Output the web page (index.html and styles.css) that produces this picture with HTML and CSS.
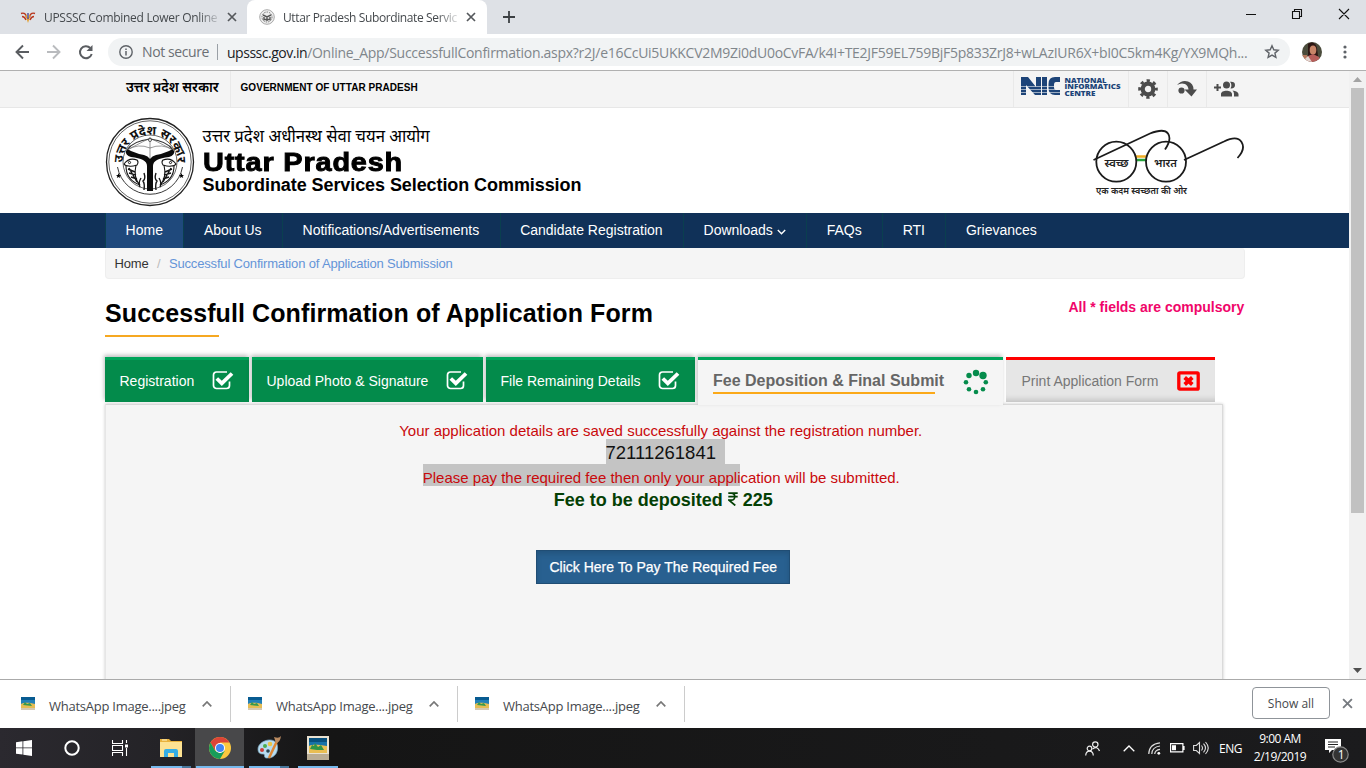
FILE: index.html
```html
<!DOCTYPE html>
<html lang="en">
<head>
<meta charset="utf-8">
<title>Uttar Pradesh Subordinate Services Selection Commission</title>
<link rel="stylesheet" href="styles.css">
</head>
<body>
<svg class="defs" width="0" height="0">
  <defs>
    <symbol id="close" viewBox="0 0 10 10"><path d="M1 1l8 8M9 1L1 9" fill="none" stroke="currentColor" stroke-width="1.7"/></symbol>
    <symbol id="check" viewBox="0 0 22 20"><path d="M17.5 11.5V15.500a3 3 0 0 1-3 3H4.500a3 3 0 0 1-3-3V5a3 3 0 0 1 3-3h10.500" fill="none" stroke="#fff" stroke-width="1.7"/><path d="M4.800 8.500l5 4.800L20 3.500" fill="none" stroke="#fff" stroke-width="3.800"/></symbol>
    <symbol id="photo" viewBox="0 0 22 24"><path d="M0 0h22v24H0z" fill="#e9e2d2"/><path d="M0 18h22v6H0z" fill="#b9ac94"/><path d="M2 2h18v15H2z" fill="#1672a8"/><path d="M2 2h18v4H2z" fill="#07507e"/><path d="M2 10c5-2 9-1 18 0v7H2z" fill="#e8bd52"/><path d="M3 13l2-4 2 1 1-3 3 4 3-2 3 5-7 0z" fill="#2e9447"/></symbol>
    <symbol id="photo-small" viewBox="0 0 14 13"><path d="M0 0h14v13H0z" fill="#d5c9b2"/><path d="M0 0h14v10H0z" fill="#2180b8"/><path d="M0 0h14v3H0z" fill="#075b91"/><path d="M0 7c5-2 9-1 14 0v4H0z" fill="#e5bd55"/><path d="M2 8l2-3 2 2 3-1 2 3z" fill="#36994c"/></symbol>
    <symbol id="up" viewBox="0 0 10 6"><path d="M.7 5.300L5 1l4.300 4.300" fill="none" stroke="currentColor" stroke-width="1.7"/></symbol>
  </defs>
</svg>

<div class="tabstrip">
  <div class="tab">
    <svg class="fav" width="16" height="16" viewBox="0 0 16 16"><path d="M1 4.500c3-1 5 0 5.500 4M15 4.500c-3-1-5 0-5.500 4M2 7.500c2 0 3 1 4 3.500M14 7.500c-2 0-3 1-4 3.500" fill="none" stroke="#b8371f" stroke-width="1.400"/><path d="M6 6l2 6 2-6" fill="none" stroke="#e4a02e" stroke-width="1.200"/><path d="M8 4v6" stroke="#3b3b8f" stroke-width="1.300"/></svg>
    <span class="tab-title t1">UPSSSC Combined Lower Online</span>
    <svg class="tab-x" width="10" height="10"><use href="#close"/></svg>
  </div>
  <div class="tab active">
    <svg class="fav" width="16" height="16" viewBox="0 0 16 16"><circle cx="8" cy="8" r="7.300" fill="#eee" stroke="#aaa"/><circle cx="8" cy="8" r="5" fill="none" stroke="#777" stroke-dasharray="1.500 1"/><path d="M4 6l4 2 4-2M8 8v4M5 8v2.500h6V8" fill="none" stroke="#555" stroke-width="1.400"/></svg>
    <span class="tab-title t2">Uttar Pradesh Subordinate Servic</span>
    <svg class="tab-x" width="10" height="10"><use href="#close"/></svg>
  </div>
  <svg class="plus" width="12" height="12" viewBox="0 0 12 12"><path d="M6 0v12M0 6h12" stroke="#3c4043" stroke-width="1.800"/></svg>
  <svg class="winctl" width="104" height="12" viewBox="0 0 104 12"><path d="M0 6.500h10M46.500 3.500h7v7h-7zM48.500 3.500v-2h7v7h-2M93 1l10 10M103 1L93 11" fill="none" stroke="#111" stroke-width="1.100"/></svg>
</div>

<div class="toolbar">
  <svg class="navicons" width="82" height="16" viewBox="0 0 82 16"><path d="M15 8H2.500M9 1.500L2.500 8 9 14.500" fill="none" stroke="#5a5d61" stroke-width="1.900"/><path d="M33 8h12.500M39 1.500L45.500 8 39 14.500" fill="none" stroke="#b9bbbe" stroke-width="1.900"/><path d="M76.300 4A6 6 0 1 0 77.700 10" fill="none" stroke="#5a5d61" stroke-width="2"/><path d="M78.500 1v6h-6z" fill="#5a5d61"/></svg>
  <div class="omnibox">
    <svg width="14" height="14" viewBox="0 0 14 14"><circle cx="7" cy="7" r="6.200" fill="none" stroke="#5f6368" stroke-width="1.400"/><path d="M7 6v4.500M7 3.400v1.500" stroke="#5f6368" stroke-width="1.500"/></svg>
    <span class="insecure">Not secure</span>
    <span class="url"><b class="host">upsssc.gov.in</b><span class="path">/Online_App/SuccessfullConfirmation.aspx?r2J/e16CcUi5UKKCV2M9Zi0dU0oCvFA/k4I+TE2JF59EL759BjF5p833ZrJ8+wLAzIUR6X+bI0C5km4Kg/YX9MQh...</span></span>
    <svg class="star" width="16" height="16" viewBox="0 0 16 16"><path d="M8 1.800l1.800 4 4.400.4-3.300 2.900 1 4.300L8 11.100l-3.900 2.300 1-4.300L1.800 6.200l4.400-.4z" fill="none" stroke="#5f6368" stroke-width="1.400"/></svg>
  </div>
  <svg class="avatar" width="20" height="20" viewBox="0 0 20 20"><clipPath id="av"><circle cx="10" cy="10" r="10"/></clipPath><g clip-path="url(#av)"><path d="M0 0h20v20H0z" fill="#4b4c3c"/><path d="M0 13h5v7H0z" fill="#b87a5e"/><path d="M6 2c4-3 8-1 9 4l1 8H6z" fill="#2d1714"/><ellipse cx="11" cy="8" rx="3.300" ry="4.500" fill="#c88568"/><path d="M3 20l3-6 5-2 6 3 2 5z" fill="#b75e5a"/><path d="M3 17l3-3 4 6H3z" fill="#e3d6d0"/></g></svg>
  <svg class="dots" width="4" height="14" viewBox="0 0 4 14"><circle cx="2" cy="2" r="1.600"/><circle cx="2" cy="7" r="1.600"/><circle cx="2" cy="12" r="1.600"/></svg>
</div>

<div class="viewport">
  <main class="page">
    <div class="topbar"><div class="container topbar-in">
      <div class="gov-hi">उत्तर प्रदेश सरकार</div>
      <div class="gov-en">GOVERNMENT OF UTTAR PRADESH</div>
      <div class="nic">
        <svg width="102" height="21" viewBox="0 0 102 21"><g fill="#1d4478"><path d="M0 1h7l8 10V1h5v18h-6L5 9v10H0zM21 1h5v18h-5zM39 1h-5q-6.500 0-6.500 7v4q0 7 6.500 7h5v-5h-4q-2 0-2-3V9q0-3 2-3h4z"/></g><path d="M0 10.500h40M0 13.500h40M0 16.500h40" stroke="#f4f4f4" stroke-width=".6"/><g class="nic-text"><text x="43.500" y="6.500" textLength="42" lengthAdjust="spacingAndGlyphs">NATIONAL</text><text x="43.500" y="13" textLength="56" lengthAdjust="spacingAndGlyphs">INFORMATICS</text><text x="43.500" y="19.500" textLength="31" lengthAdjust="spacingAndGlyphs">CENTRE</text></g></svg>
      </div>
      <div class="tool"><svg width="20" height="20" viewBox="0 0 20 20"><circle cx="10" cy="10" r="5.300" fill="none" stroke="#4c4c4c" stroke-width="4.200"/><circle cx="10" cy="10" r="8.300" fill="none" stroke="#4c4c4c" stroke-width="3" stroke-dasharray="3.260 3.260" stroke-dashoffset="1.630"/></svg></div>
      <div class="tool"><svg width="22" height="18" viewBox="0 0 22 18"><path d="M1 5Q6-.5 12 1.500q5.500 2 5.500 8H21L15.500 16.500 8.500 9.500h4q-.3-4-3.500-5.500Q5 2.500 1 5z" fill="#4c4c4c"/><circle cx="5.500" cy="10.500" r="3.100" fill="#4c4c4c"/></svg></div>
      <div class="tool last"><svg width="25" height="18" viewBox="0 0 25 18"><path d="M0 7.500h7M3.500 4v7" stroke="#4c4c4c" stroke-width="2"/><g fill="#4c4c4c"><circle cx="12.500" cy="5" r="3.500"/><path d="M7 16.500v-2.500c0-4.500 11-4.500 11 0v2.500zM16 1.800q5-.5 5 3.200t-4.500 3.400q2-3.400-.5-6.600zM18.500 10.500q5.500.8 6 3.500v2.500H20v-2.500Q20 11.500 18.500 10.500z"/></g></svg></div>
    </div></div>

    <header class="container masthead">
      <svg class="emblem" width="90" height="90" viewBox="0 0 90 90">
        <g fill="none" stroke="#222"><circle cx="45" cy="45" r="43.500" stroke-width="1.300"/><circle cx="45" cy="45" r="41.200" stroke-width=".7"/><path d="M12.500 50a33 33 0 0 0 65 0" stroke-width=".9"/><circle cx="45" cy="45" r="27" stroke-width=".7"/></g>
        <path id="arc" d="M18.300 50A27.200 27.200 0 1 1 71.700 50" fill="none"/>
        <text class="ring-text"><textPath href="#arc" startOffset="50%">उत्तर प्रदेश सरकार</textPath></text>
        <path d="M22 33Q28 24 45 22q17 2 23 11" fill="none" stroke="#333" stroke-width="1.200"/><path d="M22 33L45 21l23 12M45 20v22M22 33q11-7 23-2 12-5 23 2" fill="none" stroke="#555" stroke-width=".6"/><circle cx="45" cy="23" r="1.500" fill="#fff" stroke="#222" stroke-width=".7"/>
        <path d="M21 34q1-2.500 5 0 7 3 13 4 4 1 6 4 2-3 6-4 6-1 13-4 4-2.500 5 0 1 4-5 6-8 1-12 3-4 2-4 6v25h-6V49q0-4-4-6-4-2-12-3-6-2-5-6z" fill="#0c0c0c"/>
        <g fill="none" stroke="#151515"><path d="M19 47q5-7 13-4 2 2 0 5-6 2-8 1-4 0-5-2zM71 47q-5-7-13-4-2 2 0 5 6 2 8 1 4 0 5-2z" stroke-width="1.100"/><path d="M21 49q0 14 14 19-7-7-4-20M69 49q0 14-14 19 7-7 4-20" stroke-width="1.100"/><path d="M23 52l7 3M24 56l7 2M26 60l6 2M67 52l-7 3M66 56l-7 2M64 60l-6 2M24 51l8 14M66 51l-8 14" stroke-width="1.400"/><path d="M39 73q1-6-1-9 3-2 1-8M51 73q-1-6 1-9-3-2-1-8M35 70q-2-4 1-9M55 70q2-4-1-9" stroke-width="1.400"/><circle cx="24.500" cy="45.500" r="1.100"/><circle cx="65.500" cy="45.500" r="1.100"/></g>
        <path id="st" d="M13.500 56l.7 1.900h2l-1.600 1.200.6 2-1.700-1.200-1.700 1.200.6-2-1.600-1.200h2z"/><use href="#st" x="63"/>
      </svg>
      <div class="brand">
        <div class="brand-hi">उत्तर प्रदेश अधीनस्थ सेवा चयन आयोग</div>
        <div class="brand-up">Uttar Pradesh</div>
        <div class="brand-sub">Subordinate Services Selection Commission</div>
      </div>
      <svg class="swachh" width="153" height="68" viewBox="0 0 153 68">
        <path d="M44 27.500h10" stroke="#f0ac25" stroke-width="2.500"/><path d="M44 31h10" stroke="#25a13b" stroke-width="2.500"/>
        <g fill="none" stroke="#1b1b1b" stroke-width="1.800"><circle cx="24.300" cy="32.700" r="20"/><circle cx="74" cy="32.700" r="20"/><path d="M1.500 31L58 4.500Q72-1 76 4.500t-3 16M92 31L132 12.500Q145 6 149.500 13t-4 16"/></g>
        <g class="swachh-text"><text x="12.500" y="37.500" textLength="24" lengthAdjust="spacingAndGlyphs">स्वच्छ</text><text x="62" y="37.500" textLength="23" lengthAdjust="spacingAndGlyphs">भारत</text><text class="tagline" x="4" y="64.500" textLength="91" lengthAdjust="spacingAndGlyphs">एक कदम स्वच्छता की ओर</text></g>
      </svg>
    </header>

    <nav class="nav"><div class="container nav-in">
      <a class="home">Home</a><a>About Us</a><a>Notifications/Advertisements</a><a>Candidate Registration</a><a>Downloads <svg width="9" height="6" viewBox="0 0 9 6"><path d="M.8 1l3.700 3.700L8.200 1" fill="none" stroke="#fff" stroke-width="1.400"/></svg></a><a>FAQs</a><a>RTI</a><a class="end">Grievances</a>
    </div></nav>

    <div class="container">
      <div class="crumbs"><span>Home</span><i>/</i><a>Successful Confirmation of Application Submission</a></div>
      <div class="heading"><h1>Successfull Confirmation of Application Form</h1><span class="note">All * fields are compulsory</span></div>
      <div class="steps">
        <div class="step s1"><span>Registration</span><svg width="22" height="20"><use href="#check"/></svg></div>
        <div class="step s2"><span>Upload Photo &amp; Signature</span><svg width="22" height="20"><use href="#check"/></svg></div>
        <div class="step s3"><span>File Remaining Details</span><svg width="22" height="20"><use href="#check"/></svg></div>
        <div class="step s4"><span>Fee Deposition &amp; Final Submit</span><svg width="26" height="26" viewBox="0 0 26 26"><g fill="#058c4c"><circle cx="13" cy="4" r="3.200"/><circle cx="20" cy="6.500" r="3.700"/><circle cx="22.800" cy="13.300" r="2.300"/><circle cx="20" cy="20.300" r="2.300"/><circle cx="13" cy="23" r="2.300"/><circle cx="6" cy="20.300" r="2.300"/><circle cx="3" cy="13.300" r="2.300"/><circle cx="6" cy="6.500" r="2.700"/></g></svg></div>
        <div class="step s5"><span>Print Application Form</span><svg width="23" height="20" viewBox="0 0 23 20"><rect x="1.800" y="1.800" width="19.400" height="16.400" rx="1" fill="#e6e6e6" stroke="red" stroke-width="3.300"/><path d="M7.700 6.500l7.600 7M15.300 6.500l-7.600 7" stroke="red" stroke-width="3.800"/></svg></div>
      </div>
      <section class="panel">
        <p class="line saved">Your application details are saved successfully against the registration number.</p>
        <p class="line number"><mark>72111261841</mark></p>
        <p class="line pay"><mark>Please pay the required fee then only your appli</mark>cation will be submitted.</p>
        <p class="line fee">Fee to be deposited <svg width="10" height="14" viewBox="0 0 10 14"><path d="M.3 1.200h9.400M.3 4.700h9.400M1 1.200h2.300c4.600 0 4.600 7 0 7H1L7.300 13.500" fill="none" stroke="#044004" stroke-width="1.700"/></svg> 225</p>
        <button class="paybtn">Click Here To Pay The Required Fee</button>
      </section>
    </div>
  </main>
  <div class="scroll"><svg width="9" height="5" viewBox="0 0 9 5"><path d="M0 5l4.500-5L9 5z" fill="#a3a3a3"/></svg><div class="thumb"></div><svg class="down" width="9" height="5" viewBox="0 0 9 5"><path d="M0 0h9L4.500 5z" fill="#505050"/></svg></div>
</div>

<div class="downloads">
  <div class="dl"><svg width="14" height="13"><use href="#photo-small"/></svg><span>WhatsApp Image....jpeg</span><svg class="chev" width="10" height="6"><use href="#up"/></svg></div>
  <div class="dl"><svg width="14" height="13"><use href="#photo-small"/></svg><span>WhatsApp Image....jpeg</span><svg class="chev" width="10" height="6"><use href="#up"/></svg></div>
  <div class="dl"><svg width="14" height="13"><use href="#photo-small"/></svg><span>WhatsApp Image....jpeg</span><svg class="chev" width="10" height="6"><use href="#up"/></svg></div>
  <div class="showall"><span>Show all</span></div>
  <svg class="dl-x" width="11" height="11"><use href="#close"/></svg>
</div>

<div class="taskbar">
  <div class="task"><svg width="16" height="16" viewBox="0 0 16 16"><path d="M0 2.200l6.500-.9v6.200H0zM7.300 1.200L16 0v7.500H7.300zM0 8.300h6.500v6.300L0 13.700zM7.300 8.300H16V16l-8.700-1.300z" fill="#fff"/></svg></div>
  <div class="task"><svg width="16" height="16" viewBox="0 0 16 16"><circle cx="8" cy="8" r="6.700" fill="none" stroke="#fff" stroke-width="2"/></svg></div>
  <div class="task"><svg width="17" height="16" viewBox="0 0 17 16"><path d="M.5 0v3.500h10V0M.5 16v-3.500h10V16M.5 5.500h10v5H.5zM14.500 0v3M14.500 8v8" fill="none" stroke="#fff" stroke-width="1.100"/><path d="M13 4.500h3v3h-3z" fill="#fff"/></svg></div>
  <div class="task run group"><svg width="22" height="19" viewBox="0 0 22 19"><path d="M0 0h9l2 2h11v15H0z" fill="#e9b23c"/><path d="M0 3h22v15H0z" fill="#fde292"/><path d="M4 18v-6q0-2 2-2h10q2 0 2 2v6h-4v-4H8v4z" fill="#35ade5"/><path d="M2 1h5" stroke="#fff5c8"/></svg></div>
  <div class="task run cur"><svg width="22" height="22" viewBox="0 0 22 22"><circle cx="11" cy="11" r="11" fill="#fbc840"/><path d="M1.500 5.500A11 11 0 0 1 20.500 5.500H11L6.200 13.800z" fill="#dc4437"/><path d="M1.500 5.500A11 11 0 0 0 11 22l4.800-8.300L11 16l-4.800-2.200z" fill="#189d5a"/><circle cx="11" cy="11" r="5" fill="#fff"/><circle cx="11" cy="11" r="4" fill="#4285f4"/></svg></div>
  <div class="task run group"><svg width="24" height="24" viewBox="0 0 24 24"><path d="M1 13C1 5 16 0 20 8c2 6-1 15-11 14-3-1 0-4-3-4-3 0-5-1-5-5z" fill="#b7dcf0" stroke="#7ca9c3" stroke-width=".7"/><circle cx="5" cy="14" r="2" fill="#cc3e38"/><circle cx="8" cy="10" r="2" fill="#4cad4d"/><circle cx="13" cy="8" r="2.300" fill="#ebc348"/><circle cx="11" cy="15" r="1.800" fill="#28434f"/><path d="M20 5L12 22" stroke="#de8634" stroke-width="2.500"/><path d="M17 1q5 2 7-1-1 7-5 7z" fill="#ba8b61"/></svg></div>
  <div class="task run"><svg width="22" height="24"><use href="#photo"/></svg></div>
  <div class="tray">
    <svg class="people" width="15" height="15" viewBox="0 0 15 15" fill="none" stroke="#eee" stroke-width="1.200"><circle cx="10.300" cy="3.500" r="2.700"/><circle cx="4.500" cy="7.500" r="2.300"/><path d="M.7 14.500q.3-4.300 3.800-4.300T8.300 14.500M7.500 8q5-3.500 7 2"/></svg>
    <svg class="t-up" width="12" height="7" viewBox="0 0 12 7"><path d="M.7 6.300L6 1l5.300 5.300" fill="none" stroke="#fff" stroke-width="1.300"/></svg>
    <svg class="wifi" width="13" height="13" viewBox="0 0 13 13"><g fill="none" stroke="#ddd" stroke-width="1.200"><path d="M.8 12Q1 2 12 .8M3.800 12Q4 5 12 4M6.700 12Q7 8 12 7.300"/></g><circle cx="10.800" cy="11.300" r="1.400" fill="#fff"/></svg>
    <svg class="batt" width="15" height="10" viewBox="0 0 15 10"><path d="M.6.6h12.300v8.300H.6zM14 3v4" fill="none" stroke="#fff" stroke-width="1.200"/><path d="M2 2.200h4v5H2z" fill="#fff"/></svg>
    <svg class="vol" width="16" height="14" viewBox="0 0 16 14"><path d="M.6 4.500h2.700L6.500 1.500v11l-3.200-3H.6zM8.500 4.500q2 2.500 0 5M10.500 2.700q4 4.300 0 8.600M12.500 1q5.500 6 0 12" fill="none" stroke="#ddd" stroke-width="1.100"/></svg>
    <span class="lang">ENG</span>
    <div class="clock"><span>9:00 AM</span><span>2/19/2019</span></div>
    <svg class="action" width="25" height="26" viewBox="0 0 25 26"><path d="M0 2h16v11H7l-3 3v-3H0z" fill="#fff"/><path d="M3 5h10M3 7.500h10M3 10h7" stroke="#222"/><circle cx="15.500" cy="17.500" r="7.700" fill="#333" stroke="#8a8a8a" stroke-width="1.200"/><text x="12.700" y="21.500" class="badge">1</text></svg>
  </div>
</div>
</body>
</html>
```
FILE: styles.css
```css
* { box-sizing: border-box; }
body { margin: 0; width: 1366px; height: 768px; overflow: hidden; background: #fff; font-family: "Liberation Sans", Arial, "Noto Sans", sans-serif; display: flex; flex-direction: column; }
svg { flex: none; display: block; }
.defs { position: absolute; }

.tabstrip { height: 34px; background: #dee1e6; display: flex; align-items: center; font: 12px "Open Sans", "Noto Sans", sans-serif; color: #45494d; flex: none; }
.tab { width: 247px; height: 34px; display: flex; align-items: center; padding-left: 20px; }
.tab.active { width: 240px; background: #fff; border-radius: 8px 8px 0 0; padding-left: 12px; }
.fav { margin-right: 8px; }
.tab-title { width: 175px; overflow: hidden; white-space: nowrap; -webkit-mask-image: linear-gradient(90deg, #000 88%, transparent 102%); mask-image: linear-gradient(90deg, #000 88%, transparent 102%); }
.t1 { letter-spacing: -.3px; }
.t2 { letter-spacing: -.38px; }
.tab-x { margin-left: 8px; color: #55585c; }
.plus { margin-left: 16px; }
.winctl { margin: -6px 16px 0 auto; }

.toolbar { height: 37px; border-bottom: 1px solid #b0b0b0; display: flex; align-items: center; padding-left: 14px; flex: none; font: 14px "Open Sans", "Noto Sans", sans-serif; }
.navicons { margin-right: 12px; }
.omnibox { width: 1182px; height: 28px; border-radius: 14px; background: #f1f3f4; display: flex; align-items: center; padding-left: 11px; white-space: nowrap; }
.insecure { margin-left: 9px; width: 76px; border-right: 1px solid #9aa0a6; line-height: 16px; color: #6b6f74; letter-spacing: -.4px; }
.url { margin-left: 9px; width: 1030px; color: #80868b; }
.host { font-weight: 400; color: #202124; letter-spacing: -.48px; }
.path { letter-spacing: -.275px; }
.star { margin-left: 7px; }
.avatar { margin-left: 12px; }
.dots { margin-left: 21px; fill: #5f6368; }

.viewport { height: 608px; display: flex; overflow: hidden; flex: none; }
.page { width: 1349px; overflow: hidden; }
.container { width: 1140px; margin-left: 105px; }
.topbar { background: #f4f4f4; height: 37px; border-bottom: 1px solid #e7e7e7; }
.topbar-in { display: flex; align-items: center; height: 36px; }
.gov-hi { width: 126px; height: 36px; border-right: 1px solid #e9e9e9; padding-left: 21px; font: 600 13.700px/36px "Noto Sans Devanagari", "Noto Sans", sans-serif; white-space: nowrap; }
.gov-en { width: 783px; padding-left: 9.500px; font-size: 10px; font-weight: bold; letter-spacing: .05px; line-height: 34px; height: 36px; border-right: 1px solid #e9e9e9; }
.nic { width: 114px; padding-left: 7px; height: 36px; padding-top: 5px; }
.nic-text { font: 800 7.500px "Open Sans", sans-serif; fill: #1d4478; }
.tool { width: 39px; height: 36px; border-left: 1px solid #e9e9e9; display: flex; align-items: center; justify-content: center; }

.masthead { height: 105px; display: flex; }
.emblem { margin: 9px 0 0 -.5px; }
.ring-text { font: 700 12.500px "Noto Sans Devanagari", "Noto Sans", sans-serif; fill: #111; text-anchor: middle; }
.brand { margin: 15px 0 0 8px; white-space: nowrap; }
.brand-hi { font: 16.700px/31px "Noto Sans Devanagari", "Noto Sans", sans-serif; height: 27px; }
.brand-up { font: 900 26px/24px "Liberation Sans", Arial, sans-serif; -webkit-text-stroke: .9px #000; letter-spacing: .75px; transform: scaleX(1.11); transform-origin: 0 50%; width: 190px; }
.brand-sub { font-size: 18px; line-height: 22px; font-weight: bold; letter-spacing: -.08px; }
.swachh { margin: 21px 0 0 auto; }
.swachh-text { font: 600 11.500px "Noto Sans Devanagari", "Noto Sans", sans-serif; fill: #222; }
.swachh-text .tagline { font-size: 9.500px; }

.nav { background: #103158; height: 35px; }
.nav-in { display: flex; border-left: 1px solid #0a3f4f; }
.nav a { color: #fff; font-size: 14px; line-height: 35px; padding: 0 20.4px 0 19.6px; border-right: 1px solid #0a3f4f; white-space: nowrap; }
.nav a.home { background: #1f497c; }
.nav a.end { border: 0; }
.nav svg { display: inline-block; }

.crumbs { height: 31px; background: #f5f5f5; border: 1px solid #eee; border-top: 0; border-radius: 4px; display: flex; padding-left: 8.5px; line-height: 31px; font-size: 13px; color: #333; letter-spacing: -.17px; }
.crumbs i { color: #bbb; font-style: normal; padding: 0 8.500px; }
.crumbs a { color: #6494d8; }
.heading { display: flex; height: 78px; justify-content: space-between; }
h1 { margin: 18px 0 0; font-size: 25px; line-height: 32px; height: 40px; letter-spacing: .1px; white-space: nowrap; background: linear-gradient(#f6a821, #f6a821) 0 100% / 114px 2px no-repeat; }
.note { font-size: 14px; font-weight: bold; color: #f0056a; margin: 19px .7px 0 0; line-height: 18px; }

.steps { display: flex; gap: 3px; height: 47px; position: relative; z-index: 1; }
.step { height: 45px; border-top: 3px solid #00a45a; background: #038b4b; color: #fff; font-size: 14px; display: flex; align-items: center; justify-content: space-between; padding: 0 15px 0 14.500px; white-space: nowrap; box-shadow: -1px -2px 4px rgba(0,0,0,.25); }
.step svg { position: relative; top: -1px; }
.s1 { width: 144px; }
.s2 { width: 231px; }
.s3 { width: 209px; }
.s4 { width: 305px; height: 48px; background: #f5f5f5; color: #666; font-size: 16px; font-weight: bold; padding: 0 14px 2px 15px; }
.s4 span { background: linear-gradient(#fba919, #fba919) 0 100% / 222px 2px no-repeat; padding: 3px 0 4px; }
.s4 svg { top: 0; }
.s5 { width: 209px; border-color: #f00; color: #777; background: #e6e6e6; padding-left: 15.500px; box-shadow: inset 0 -7px 6px -5px rgba(0,0,0,.18); }
.s5 svg { top: 0; }
.panel { width: 1118px; height: 290px; background: #f5f5f5; border: 1px solid #dadada; border-left-color: #e6e6e6; box-shadow: 0 0 3px rgba(0,0,0,.22); padding: 15px 1.500px 0 0; display: flex; flex-direction: column; align-items: center; }
.line { margin: 0; white-space: nowrap; }
mark { background: #c4c4c4; color: inherit; display: inline-block; }
.saved { color: #c9090c; font-size: 15px; line-height: 22px; height: 19px; margin-right: 5px; }
.number { font-size: 18.500px; line-height: 28px; height: 25px; color: #111; }
.number mark { height: 25px; padding-right: 9px; margin-left: 4px; }
.pay { color: #c9090c; font-size: 15px; line-height: 28px; height: 22px; margin-right: 4px; }
.pay mark { height: 22px; }
.fee { color: #044004; font-size: 18px; font-weight: bold; line-height: 28px; height: 64px; }
.fee svg { display: inline-block; }
.paybtn { width: 254px; height: 34px; border: 1px solid #204d74; background: #286090; box-shadow: inset 0 3px 5px rgba(0,0,0,.125); color: #fff; font: 14px "Liberation Sans", Arial, sans-serif; -webkit-text-stroke: .25px #fff; padding: 0; white-space: nowrap; }

.scroll { width: 17px; background: #f1f1f1; display: flex; flex-direction: column; align-items: center; padding: 6px 0; }
.thumb { width: 13px; height: 425px; background: #c1c1c1; margin-top: 6px; }
.down { margin-top: auto; }

.downloads { height: 49px; border-top: 1px solid #aaa; display: flex; align-items: center; flex: none; font: 13px "Open Sans", "Noto Sans", sans-serif; color: #45494d; }
.dl { width: 227px; height: 36px; border-right: 1px solid #ccc; display: flex; align-items: center; padding-left: 17px; white-space: nowrap; }
.dl:first-child { width: 231px; padding-left: 21px; }
.dl svg { margin-top: -2px; }
.dl span { margin: 4px 0 0 14px; width: 138px; letter-spacing: -.25px; }
.dl .chev { margin: 0 0 0 15px; color: #777; }
.showall { margin: -2px 0 0 auto; width: 78px; height: 32px; border: 1px solid #8f9499; border-radius: 4px; display: flex; align-items: center; justify-content: center; font-size: 12px; }
.dl-x { margin: -2px 13px 0 12px; color: #777b80; }

.taskbar { height: 40px; background: linear-gradient(90deg, #2b292f 0, #242327 160px, #151515 330px, #19191a 1000px, #1b1b1d); display: flex; flex: none; font: 12px "Open Sans", "Noto Sans", sans-serif; color: #fff; }
.task { width: 49px; height: 40px; display: flex; align-items: center; justify-content: center; }
.task:first-child { width: 48px; }
.task:nth-child(2), .task:nth-child(3) { padding-right: 2px; }
.run { background: linear-gradient(#76b9ed, #76b9ed) 50% 100% / 40px 2px no-repeat; }
.group { background: linear-gradient(90deg, #76b9ed 31px, #48779c 31px) 50% 100% / 40px 2px no-repeat; }
.cur { background: linear-gradient(#76b9ed, #76b9ed) 50% 100% / 48px 2px no-repeat, #48484a; }
.tray { margin-left: auto; display: flex; align-items: center; width: 281px; }
.t-up { margin-left: 23px; }
.wifi { margin-left: 13px; }
.batt { margin-left: 9px; }
.vol { margin-left: 8px; }
.lang { margin-left: 10px; width: 25px; letter-spacing: -.5px; }
.clock { width: 60px; margin-left: 6px; display: flex; flex-direction: column; align-items: center; font-size: 12px; line-height: 18px; letter-spacing: -.5px; white-space: nowrap; }
.action { margin-left: 15px; margin-top: 4px; }
.badge { font: 12px "Open Sans", sans-serif; fill: #fff; }
```
